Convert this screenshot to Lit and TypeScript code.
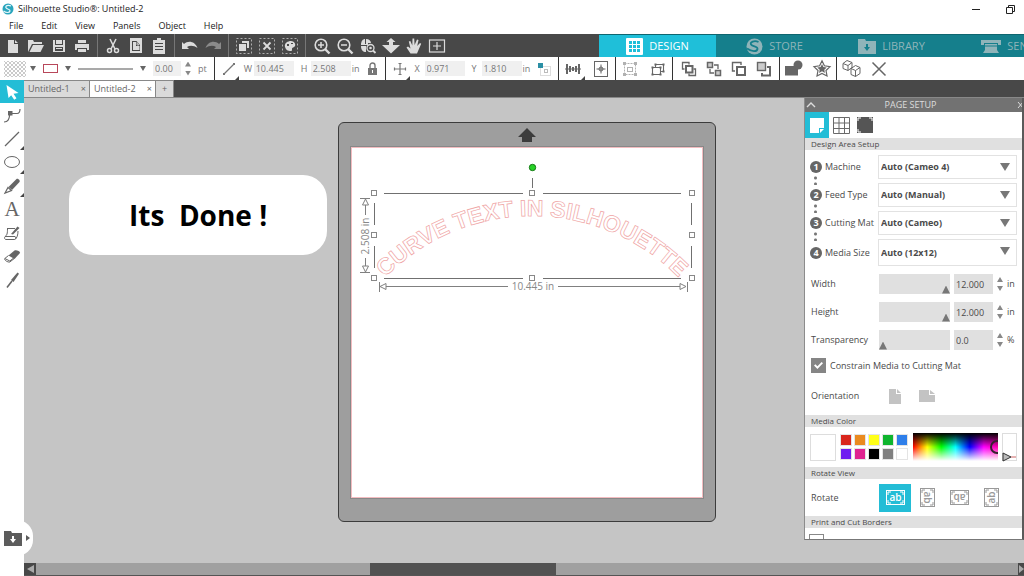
import { LitElement, html, svg, css, nothing } from "lit";
import { customElement, state } from "lit/decorators.js";
import { classMap } from "lit/directives/class-map.js";
import { styleMap } from "lit/directives/style-map.js";

const icon = (body: unknown, w = 16, h = w) =>
  html`<svg class="icon" width=${w} height=${h} viewBox="0 0 ${w} ${h}" aria-hidden="true">${body}</svg>`;

const line = (d: string, width = 1) =>
  svg`<path d=${d} fill="none" stroke="currentColor" stroke-width=${width}></path>`;
const solid = (d: string) => svg`<path d=${d} fill="currentColor" fill-rule="evenodd"></path>`;
const dashed = svg`<rect x="0.5" y="0.5" width="15" height="15" fill="none" stroke="currentColor" stroke-dasharray="2 2" opacity="0.7"></rect>`;

const fileTools: [string, unknown][][] = [
  [
    ["New", solid("M3 2h6v4h4v9H3zM10 2l3 3h-3z")],
    ["Open", svg`${solid("M0 14V2h5l1 2h8v2H4z")}${solid("M1.500 14L5 7h11l-3.500 7z")}`],
    ["Save", solid("M2 2h2v5h8V2h2v12H2zM5 2h6v4H5zM4 9v4h8V9zM5 10h6v1H5z")],
    ["Print", svg`${solid("M4 2h8v3H4zM1 6h14v6h-2v-2H3v2H1z")}${solid("M4 11h8v3H4z")}`],
  ],
  [
    ["Cut", svg`${line("M5 1l5 10M11 1L6 11", 1.6)}<circle cx="4.500" cy="12.500" r="2" fill="none" stroke="currentColor" stroke-width="1.500"></circle><circle cx="11.500" cy="12.500" r="2" fill="none" stroke="currentColor" stroke-width="1.500"></circle>`],
    ["Copy", svg`${solid("M2 0h12v15H2zM4 3v10h8V7L8.500 3z")}${solid("M5 4h3v4h3.500v4H5z")}${line("M9 4.500l2 2.500H9z", 0.8)}`],
    ["Paste", solid("M2 2h4V0h4v2h4v14H2zM4 5v1h8V5zM4 8v1h8V8zM4 11v1h8v-1z")],
  ],
  [
    ["Undo", solid("M0 11V4l2 2c4-4 11-3 13.500 4C12 7.500 8 7 5 9l2 2z")],
    ["Redo", svg`<g opacity="0.45">${solid("M16 11V4l-2 2C10 2 3 3 .5 10 4 7.500 8 7 11 9l-2 2z")}</g>`],
  ],
  [
    ["Select all", svg`${dashed}${solid("M6 3h7v7h-2V5H6zM3 6h7v7H3z")}`],
    ["Deselect", svg`${dashed}${line("M4.500 4.500l7 7M11.500 4.500l-7 7", 1.8)}`],
    ["Select by color", svg`${dashed}${solid("M3 9c-1-4 3-6 6-6s5 3 4 5-3 1-3 3 0 2-2 2-4-1-5-4zM5 6v2h2V6zM9 5v1h2V5z")}`],
  ],
  [
    ["Zoom in", svg`<circle cx="7" cy="7" r="5.800" fill="none" stroke="currentColor" stroke-width="1.600"></circle>${line("M11 11l4.500 4.500", 2.400)}${line("M7 4v6M4 7h6", 1.500)}`],
    ["Zoom out", svg`<circle cx="7" cy="7" r="5.800" fill="none" stroke="currentColor" stroke-width="1.600"></circle>${line("M11 11l4.500 4.500", 2.400)}${line("M4 7h6", 1.500)}`],
    ["Zoom selection", svg`${solid("M1 7c0-4 2-6 4-6v5h1V1c3 0 5 2 5 4H8v2zM1 8h5v6c-3 0-5-2-5-6z")}<circle cx="10.500" cy="10" r="3.500" fill="none" stroke="currentColor" stroke-width="1.300"></circle><circle cx="10.500" cy="10" r="1.300" fill="currentColor"></circle>${line("M13 12.500l2.500 2.500", 1.8)}`],
    ["Drag zoom", solid("M8 0l4.500 4H10v3h7l-9 8.500L-1 7h7V4H3.500z")],
    ["Pan", solid("M4.500 15.500L.5 9.500 2 8.500l2.500 2L2.800 3.500 4.300 3 6.300 7.500 6.500.5H8.200l.4 6.500L11 1.500l1.500.6-1.300 5.900L14 5l1.200.8L12.500 12 11 15.500z")],
    ["Fit to page", svg`<rect x="0.500" y="2" width="15" height="12" fill="none" stroke="currentColor" stroke-width="1.200"></rect>${line("M8 4v8M4 8h8", 1.200)}`],
  ],
];

const editTools: [string, unknown, boolean?][][] = [
  [
    ["Align", svg`${solid("M1 3h2v10H1zM4 5h2v6H4zM7 6h2v4H7zM10 5h2v6h-2zM13 3h2v10h-2z")}${line("M0 8h16")}`, true],
    ["Center to page", svg`<rect x="1.500" y="0.500" width="13" height="15" fill="none" stroke="currentColor"></rect>${line("M8 3.500v9M3.500 8h9")}<circle cx="8" cy="8" r="2" fill="none" stroke="currentColor"></circle>`],
  ],
  [
    ["Group", svg`<g opacity="0.5"><rect x="2.500" y="2.500" width="11" height="11" fill="none" stroke="currentColor" stroke-dasharray="2 1"></rect>${solid("M1 1h3v3H1zM12 1h3v3h-3zM1 12h3v3H1zM12 12h3v3h-3z")}<rect x="5.500" y="6.500" width="5" height="4" fill="none" stroke="currentColor"></rect></g>`],
    ["Ungroup", svg`${line("M2.500 6.500h8v7h-8zM5.500 6V3.500h8v7H11", 1.1)}${solid("M1.500 5.500h2v2h-2zM9.500 5.500h2v2h-2zM1.500 12.500h2v2h-2zM9.500 12.500h2v2h-2zM12.500 2.500h2v2h-2zM12.500 9.500h2v2h-2zM4.500 2.500h2v2h-2z")}`],
  ],
  [
    ["Bring to front", svg`${line("M5 5h6.500v6.500H5z", 2)}${line("M3.500 8H1.500V1.500H8v2M12.500 8h2v6.500H8v-2", 1.3)}`],
    ["Send to back", svg`<path d="M1.500 1.500h5v5h-5zM9.500 9.500h5v5h-5z" fill="#ccc" stroke="currentColor" stroke-width="1.500"></path>${line("M8 4h4v4M4 8v4h4", 1.3)}`],
    ["Bring forward", svg`${line("M6 6h8v8H6z", 2)}${line("M4 10H1.500V1.500H10V4", 1.4)}`],
    ["Send backward", svg`<rect x="1.500" y="1.500" width="8" height="8" fill="#ccc" stroke="currentColor" stroke-width="1.400"></rect>${line("M11 6h3v8.500H6V12", 2)}`],
  ],
  [
    ["Modify", svg`<rect x="0" y="6" width="13" height="9.500" fill="currentColor"></rect><circle cx="13" cy="5" r="4.500" fill="currentColor"></circle>`],
    ["Offset", svg`${line("M9 .8l2.400 5 5.600.8-4 3.900 1 5.500-5-2.600-5 2.600 1-5.500-4-3.900 5.600-.8z", 1.2)}${solid("M9 4l1.400 3 3.300.4-2.400 2.300.6 3.200L9 11.300l-2.900 1.600.6-3.200-2.400-2.300 3.300-.4z")}`],
  ],
  [
    ["Warehouse", svg`${line("M1 3.500l4-3 5 2v5l-4 3-5-2zM1 3.500l5 2v5M6 5.500l4-3M9 8.500l4.500-3 4.500 2v6l-4.500 3-4.500-2zM9 8.500l4.500 2v6M13.500 10.500l4.500-3")}`],
    ["Close", line("M1.500 1.500l13 13M14.500 1.500l-13 13", 1.5)],
  ],
];
const wide = new Set(["Modify", "Offset", "Warehouse"]);

const drawTools: [string, unknown, boolean?][] = [
  ["Select", svg`<path d="M2.500 1l12 8-5 .8 3 4.500-2.300 1.500-3-4.600L4.500 14z" fill="#fff"></path>`],
  ["Edit points", svg`${line("M0 15c4 0 5-2 6-8.500h7c2 0 3-1 3-4.500", 1.2)}${solid("M4 4h4.500v4.500H4z")}`],
  ["Line", line("M1 15L15 1", 1.2), true],
  ["Ellipse", svg`<ellipse cx="8" cy="8" rx="7.500" ry="5.500" fill="none" stroke="currentColor"></ellipse>`, true],
  ["Draw", svg`${solid("M4.500 9L12.500 1c1.500-.8 4 1.500 3 3L8 12z")}${line("M4 9.500L7.500 12.500 1 15z", 1.2)}`, true],
  ["Text", nothing],
  ["Sketch", svg`${line("M3 3.500h8M3.500 3.500c0 5-.5 7-2.500 8h10c1 0 1 3-.5 3H1.500c-1.500-1-1-3 0-3M14 6c0 4-1 7-3 8.500")}${solid("M7 9l6.500-7.500 2 1.500L9 9.500z")}`],
  ["Eraser", svg`${solid("M4.500 7.500l6-5c1.500-.8 6 .5 5.500 2.500L10.500 11z")}${line("M4.500 7.500L.8 10.500c-1 1.500 3 4 5 3.500l4.500-3.500M.8 10.500l5 2.500 4.500-3.500", 1)}`],
  ["Knife", svg`${solid("M7 8l6.500-7.500 1.500 1.200L9.500 10z")}${line("M8 9l-5 6.500", 1.6)}`],
];

const folder = svg`<path d="M0 1h7l1 2h10v13H0z" fill="currentColor"></path>`;

const workspaces: [string, unknown][] = [
  ["DESIGN", svg`<rect width="17" height="17" rx="1" fill="#fff"></rect><path d="M3 3h3v3H3zM7 3h3v3H7zM11 3h3v3h-3zM3 7h3v3H3zM7 7h3v3H7zM11 7h3v3h-3zM3 11h3v3H3zM7 11h3v3H7zM11 11h3v3h-3z" fill="#1fbfd9"></path>`],
  ["STORE", svg`<circle cx="8.500" cy="8.500" r="8" fill="currentColor"></circle><path d="M12.500 4c-4-2-9 0-7.500 2.500S12 8 11.500 11 6 14 1 10.500" fill="none" stroke="#157f8c" stroke-width="1.800"></path>`],
  ["LIBRARY", svg`${folder}<path d="M8 6h2v3h2l-3 4-3-4h2z" fill="#157f8c"></path>`],
  ["SEND", svg`<path d="M0 2h20v5h-3V5H3v2H0zM4 6h12v6l2 3H2l2-3z" fill="currentColor"></path><path d="M4 8h12" stroke="#157f8c"></path>`],
];

const machineRows: [string, string][] = [
  ["Machine", "Auto (Cameo 4)"],
  ["Feed Type", "Auto (Manual)"],
  ["Cutting Mat", "Auto (Cameo)"],
  ["Media Size", "Auto (12x12)"],
];
const sizeRows: [string, number, string, string][] = [
  ["Width", 100, "12.000", "in"],
  ["Height", 100, "12.000", "in"],
  ["Transparency", 0, "0.0", "%"],
];
const palette = ["#d9261c", "#ea8a1f", "#ffff1a", "#0fb52e", "#2f7fea", "#6f1df0", "#df2390", "#000000", "#808080", "#ffffff"];

const down = html`<svg class="icon" width="6" height="6" viewBox="0 0 6 6" aria-hidden="true"><path d="M0 0h6L3 5z" fill="#666"></path></svg>`;

const shared = css`
  * { box-sizing: border-box; }
  :host { font-family: "Open Sans", "Noto Sans", sans-serif; font-size: 9px; line-height: 12px; color: #4a4a4a; }
  button { font: inherit; color: inherit; background: none; border: 0; padding: 0; margin: 0; display: flex; align-items: center; justify-content: center; position: relative; }
  input, select { font: inherit; color: inherit; border: 0; margin: 0; border-radius: 0; min-width: 0; }
  .icon { display: block; flex: none; overflow: visible; }
  .spin { display: flex; flex-direction: column; gap: 4px; flex: none; }
  .spin button { width: 6px; height: 5px; background: #888; clip-path: polygon(50% 0, 100% 100%, 0 100%); }
  .spin button + button { clip-path: polygon(0 0, 100% 0, 50% 100%); }
`;

const spinner = (name: string) => html`<span class="spin">
  <button aria-label="Increase ${name}"></button><button aria-label="Decrease ${name}"></button>
</span>`;

@customElement("design-mat")
class DesignMat extends LitElement {
  static styles = [shared, css`
    :host { display: block; }
    .mat { background: #9e9e9e; border: 1px solid #3c3c3c; border-radius: 6px; padding: 0 11px 22px; }
    .feed { height: 23px; display: flex; align-items: center; justify-content: center; }
    .sheet { background: #fff; display: block; }
    .dim { font-size: 10px; fill: #888; }
    .curve { font: 700 23px "Liberation Sans", sans-serif; fill: none; stroke: #efa5a5; stroke-width: 0.7px; }
  `];
  render() {
    const handles = [[24, 47], [182, 47], [342, 47], [24, 89], [342, 89], [24, 132], [182, 132], [342, 132]];
    return html`<div class="mat">
      <div class="feed">${icon(svg`<path d="M9 0l9 9h-4v5H4V9H0z" fill="#3c3c3c"></path>`, 18, 14)}</div>
      <svg class="sheet" width="354" height="353" viewBox="0 0 354 353" role="img" aria-label="Curve text in Silhouette">
        <rect x="0.500" y="0.500" width="353" height="352" fill="none" stroke="#888"></rect>
        <rect x="1.500" y="1.500" width="351" height="350" fill="none" stroke="#f3bcc0"></rect>
        <path id="arc" d="M-24 276A206 206 0 0 1 388 276" fill="none"></path>
        <text class="curve" text-anchor="middle"><textPath href="#arc" startOffset="50%">CURVE TEXT IN SILHOUETTE</textPath></text>
        <path d="M34 47.500H173M193 47.500H331M34 132.500H173M193 132.500H331M24.500 57V79M24.500 100V122M341.500 57V79M341.500 100V122M182.500 32V42" stroke="#707070" fill="none"></path>
        ${handles.map(([x, y]) => svg`<rect x=${x - 2.5} y=${y - 2.5} width="5" height="5" fill="#fff" stroke="#888"></rect>`)}
        <circle cx="182.500" cy="21.500" r="3.200" fill="#27d227" stroke="#147a14"></circle>
        <path d="M10 52.500H20M15.500 53l-3 6h6zM15.500 59V69M15.500 112V120M12.500 120h6l-3 6zM10 126.500H20M29.500 136V146M30 140.500l6-3v6zM36 140.500H158M208 140.500H330M330 137.500l6 3-6 3zM337.500 136V146" fill="none" stroke="#808080"></path>
        <text class="dim" x="183" y="144" text-anchor="middle">10.445 in</text>
        <text class="dim" transform="translate(19 90) rotate(-90)" text-anchor="middle">2.508 in</text>
      </svg>
    </div>`;
  }
}

@customElement("page-setup")
class PageSetup extends LitElement {
  @state() private rotation = 0;
  static styles = [shared, css`
    :host { display: block; background: #fff; border-left: 1px solid #8c8c8c; border-right: 2px solid #5a5a5a; border-bottom: 1px solid #777; overflow: hidden; }
    .head { height: 14px; background: #727272; color: #ddd; display: flex; align-items: center; padding-left: 1px; }
    .head span { flex: 1; text-align: center; padding-right: 13px; }
    .tabs { display: flex; height: 26px; }
    .tabs button { width: 24px; color: #6a6a6a; }
    .tabs .on, .turn .on { background: #23bdd6; color: #fff; }
    h2 { font-size: 8px; line-height: 12px; font-weight: 400; margin: 0; padding-left: 6px; background: #e0e0e0; }
    .rows { padding: 5px 5px 2px; display: flex; flex-direction: column; gap: 4px; }
    .row { display: grid; grid-template-columns: 68px 1fr; align-items: center; min-height: 24px; position: relative; }
    .row label { display: flex; align-items: center; white-space: nowrap; gap: 3px; }
    .num { width: 12px; height: 12px; border-radius: 6px; background: #666; color: #fff; font-weight: 700; text-align: center; }
    .link { position: absolute; left: 4px; top: 20px; width: 3px; height: 10px; background: radial-gradient(circle, #777 1px, transparent 2px) 0 0 / 3px 6px; }
    .pick { position: relative; display: flex; height: 24px; }
    .row:nth-child(4) .pick { height: 27px; }
    select { appearance: none; background: #fff; border: 1px solid #e2e2e2; flex: 1; font-weight: 700; padding: 0 2px; color: #4a4a4a; }
    .pick .icon { position: absolute; right: 7px; top: 8px; pointer-events: none; }
    .sizes { padding: 6px 9px 0 6px; display: flex; flex-direction: column; gap: 8px; }
    .size { display: grid; grid-template-columns: 64px 71px 39px 6px 10px; column-gap: 4px; align-items: center; height: 20px; }
    .size input { width: 100%; height: 20px; background: #e0e0e0; padding: 0 2px; }
    .size input[type="range"] { appearance: none; padding: 0; }
    input[type="range"]::-webkit-slider-thumb { appearance: none; width: 8px; height: 8px; margin-top: 11px; background: #777; clip-path: polygon(50% 0, 100% 100%, 0 100%); }
    .check { display: flex; align-items: center; gap: 4px; padding: 8px 0 0 6px; }
    .check input { appearance: none; width: 15px; height: 15px; background: #858585; display: grid; place-items: center; }
    .check input:checked::after { content: ""; width: 9px; height: 7px; background: #fff; clip-path: polygon(0 50%, 15% 32%, 38% 60%, 85% 0, 100% 18%, 38% 100%); }
    .orient { display: flex; align-items: center; padding: 4px 6px 0; height: 42px; }
    .orient span, .turn span { width: 68px; color: #4a4a4a; }
    .orient button, .turn button { width: 32px; height: 28px; color: #999; }
    .orient button { color: #c3c3c3; }
    .media { display: flex; align-items: center; height: 40px; padding: 0 5px; gap: 4px; }
    .current { width: 26px; height: 27px; border: 1px solid #ddd; background: #fff; }
    .colors { display: grid; grid-template-columns: repeat(5, 12px); gap: 2px; }
    .colors button { height: 12px; border: 1px solid #e4e4e4; }
    .spectrum { position: relative; flex: 1; margin-left: 1px; height: 28px; overflow: hidden; background: linear-gradient(#000, transparent 50%, #fff), linear-gradient(90deg, #f00, #ff0, #0f0, #0ff, #00f, #f0f, #f0a); }
    .ring { position: absolute; right: -6px; top: 7px; width: 14px; height: 14px; border: 2px solid #3a2030; border-radius: 7px; }
    .shade { position: relative; width: 15px; height: 28px; border: 1px solid #ddd; }
    .shade .icon { position: absolute; left: -1px; bottom: -2px; }
    .turn { display: flex; align-items: center; height: 37px; padding: 0 6px; }
    .turn button:nth-of-type(2) svg { transform: rotate(90deg); }
    .turn button:nth-of-type(3) svg { transform: rotate(180deg); }
    .turn button:nth-of-type(4) svg { transform: rotate(270deg); }
    .turn .on.on { color: #fff; }
    .turn text { font-size: 10px; font-weight: 600; fill: currentColor; }
    .border { padding: 6px 0 0 4px; height: 11px; overflow: hidden; }
    .border input { appearance: none; display: block; width: 15px; height: 15px; border: 1px solid #888; }
  `];
  render() {
    return html`
      <div class="head">
        <button aria-label="Collapse">${icon(line("M1 6l4-4 4 4", 1.4), 10, 8)}</button>
        <span>PAGE SETUP</span>
        <button aria-label="Close panel">${icon(line("M0 1l5 6M5 1L0 7"), 4, 8)}</button>
      </div>
      <div class="tabs">
        <button class="on" aria-label="Page">${icon(svg`<path d="M0 0h14v10h-5v5H0z" fill="#fff"></path><path d="M10 15v-4h4z" fill="#fff"></path>`, 14, 15)}</button>
        <button aria-label="Grid">${icon(line("M.5.500h16v16H.5zM6 0v17M11.500 0v17M0 6h17M0 11.500h17"), 17)}</button>
        <button aria-label="Registration marks">${icon(svg`<rect width="16" height="16" fill="#555"></rect><path d="M1 4V1h3M12 1h3v3M1 12v3h3" fill="none" stroke="#fff"></path>`, 16)}</button>
      </div>
      <h2>Design Area Setup</h2>
      <div class="rows">
        ${machineRows.map(([name, value], i) => html`<div class="row">
          <label for="m${i}"><span class="num">${i + 1}</span>${name}</label>
          ${i < 3 ? html`<i class="link"></i>` : nothing}
          <span class="pick"><select id="m${i}"><option>${value}</option></select>
            ${icon(svg`<path d="M0 0h10L5 8z" fill="#777"></path>`, 10, 8)}</span>
        </div>`)}
      </div>
      <div class="sizes">
        ${sizeRows.map(([name, pos, value, unit], i) => html`<div class="size">
          <label for="s${i}">${name}</label>
          <input type="range" aria-label="${name} slider" .value=${String(pos)}>
          <input id="s${i}" type="text" .value=${value}>
          ${spinner(name)}<span>${unit}</span>
        </div>`)}
      </div>
      <label class="check"><input type="checkbox" checked>Constrain Media to Cutting Mat</label>
      <div class="orient"><span>Orientation</span>
        <button aria-label="Portrait">${icon(solid("M0 0h7v5h5v10H0zM8 0l4 4H8z"), 12, 15)}</button>
        <button aria-label="Landscape">${icon(solid("M0 0h10v5h6v7H0zM11 0l5 4h-5z"), 16, 12)}</button>
      </div>
      <h2>Media Color</h2>
      <div class="media">
        <span class="current"></span>
        <div class="colors">${palette.map((c) => html`<button aria-label=${c} style=${styleMap({ background: c })}></button>`)}</div>
        <div class="spectrum"><i class="ring"></i></div>
        <div class="shade">${icon(svg`<path d="M1 1l8 4-8 4z" fill="#bbb" stroke="#333"></path><path d="M9 5h5" stroke="#c66"></path>`, 14, 10)}</div>
      </div>
      <h2>Rotate View</h2>
      <div class="turn"><span>Rotate</span>
        ${[0, 90, 180, 270].map((deg) => html`<button class=${classMap({ on: deg === this.rotation })} aria-label="Rotate ${deg}" @click=${() => (this.rotation = deg)}>
          ${icon(svg`<rect x="0.500" y="0.500" width="18" height="14" fill="none" stroke="currentColor"></rect><path d="M2 5V2h3M14 2h3v3M2 10v3h3M14 13h3v-3" fill="none" stroke="currentColor"></path><text x="9.500" y="11" text-anchor="middle">ab</text>`, 19, 15)}
        </button>`)}
      </div>
      <h2>Print and Cut Borders</h2>
      <div class="border"><input type="checkbox" aria-label="Show print border"></div>`;
  }
}

@customElement("app-root")
class AppRoot extends LitElement {
  @state() private tool = "Select";
  static styles = [shared, css`
    :host { display: flex; flex-direction: column; height: 100vh; overflow: hidden; background: #fff; }
    .title { display: flex; align-items: center; height: 18px; padding: 0 9px 0 2px; color: #222; gap: 4px; }
    .title span { flex: 1; }
    .title button + button { margin-left: 22px; }
    .menu { display: flex; align-items: center; height: 16px; padding-left: 9px; gap: 18px; color: #222; }
    .bar { display: flex; height: 23px; background: #484848; color: #dcdcdc; }
    .tools { display: flex; flex: 1; }
    .set { display: flex; padding: 0 4px 0 3px; border-right: 1px solid #777; }
    .set:first-child { padding-left: 1px; }
    .set:last-child { border: 0; padding-left: 4px; }
    .set button { width: 23px; }
    .spaces { display: flex; flex: 0 0 425px; overflow: hidden; background: #157f8c; border-top: 1px solid #0f6670; }
    .spaces a { flex: 0 0 117px; display: flex; align-items: center; justify-content: center; gap: 6px; font-size: 11px; color: #8fb4b9; text-decoration: none; }
    .spaces .on { background: #1fbfd9; color: #fff; }
    .options { display: flex; height: 23px; background: #fff; color: #777; overflow: hidden; }
    .opt { display: flex; align-items: center; gap: 7px; padding: 0 7px 0 6px; border-right: 1px solid #333; }
    .opt:first-child { padding-left: 4px; }
    .opt label { display: flex; align-items: center; gap: 3px; }
    .opt label span { width: 7px; }
    .opt input { width: 40px; height: 15px; background: #f0f0f0; padding: 0 2px; }
    .opt .stroke { width: 28px; }
    .near { display: flex; align-items: center; gap: 4px; }
    .drop { gap: 7px; }
    .drop.fill { gap: 4px; }
    .duo { display: flex; align-items: center; gap: 1px; }
    .pair { display: flex; border-right: 1px solid #333; color: #666; }
    .pair:last-child { border: 0; }
    .pair button { width: 28px; }
    .pair.four { padding: 0 3px; }
    .pair.four button { width: 25px; }
    .more::after { content: ""; position: absolute; right: 2px; bottom: 0; border: 2px solid; border-color: transparent #444 #444 transparent; }
    .opt .more { height: 23px; }
    .opt .more::after { right: -2px; }
    .main { display: flex; flex: 1; min-height: 0; }
    .side { flex: 0 0 24px; position: relative; z-index: 1; background: #fff; color: #666; }
    .draw { display: flex; flex-direction: column; justify-content: space-between; height: 211px; }
    .draw button { width: 24px; height: 23px; }
    .draw .on { background: #23bdd6; }
    .draw .more::after { right: 0; }
    .serif { font: 21px "Liberation Serif", serif; }
    .lib { position: absolute; left: 0; bottom: 20px; width: 33px; height: 36px; background: #fff; border-radius: 0 16px 16px 0; gap: 4px; color: #5c5c5c; }
    .work { flex: 1; display: flex; flex-direction: column; min-width: 0; }
    .docs { display: flex; height: 18px; background: #484848; border-bottom: 1px solid #888; color: #666; }
    .doc { display: flex; align-items: center; justify-content: space-between; width: 66px; padding: 0 3px 0 4px; background: #dadada; border: 1px solid #888; border-width: 1px 1px 0 0; }
    .doc.on { background: #fff; }
    .doc.add { width: 18px; padding: 0; justify-content: center; }
    .canvas { position: relative; flex: 1; display: flex; justify-content: center; align-items: flex-start; padding: 24px 0 0 6px; background: #c5c5c5; min-height: 0; overflow: hidden; }
    .note { position: absolute; left: 45px; top: 77px; padding: 20px 60px; border-radius: 24px; background: #fff; color: #000; font-size: 28px; line-height: 40px; font-weight: 700; white-space: pre; }
    page-setup { position: absolute; right: 0; top: 0; width: 220px; }
    .scroll { display: flex; align-items: stretch; height: 13px; background: #a0a0a0; border-bottom: 1px solid #555; color: #aaa; }
    .scroll button { width: 12px; background: #484848; }
    .scroll button:last-child { width: 6px; }
    .track { flex: 1; display: flex; }
    .thumb { width: 19%; margin-left: 34%; background: #525252; }
  `];

  private field(name: string, value: string) {
    return html`<label><span>${name}</span><input type="text" .value=${value}></label>`;
  }

  render() {
    return html`
      <header class="title">
        ${icon(svg`<circle cx="6" cy="6" r="5.500" fill="#2aa5bd"></circle><path d="M9 3C6 1.500 3 3 4 4.800S8.500 6 8 8 4 10 1.500 8" fill="none" stroke="#e8f8fb" stroke-width="1.200"></path>`, 12)}
        <span>Silhouette Studio®: Untitled-2</span>
        <button aria-label="Minimize">${icon(line("M0 4.500h8"), 8)}</button>
        <button aria-label="Restore">${icon(svg`<path d="M.5 2.500h6v6h-6zM2.500 2V.500h6v6H7" fill="none" stroke="#222"></path>`, 9)}</button>
      </header>
      <nav class="menu">${["File", "Edit", "View", "Panels", "Object", "Help"].map((m) => html`<button>${m}</button>`)}</nav>
      <div class="bar">
        <div class="tools">${fileTools.map((set) => html`<div class="set">${set.map(([n, i]) => html`<button aria-label=${n}>${icon(i)}</button>`)}</div>`)}</div>
        <nav class="spaces">${workspaces.map(([n, i], k) => html`<a href="#${n}" class=${classMap({ on: k === 0 })}>${icon(i, k > 2 ? 20 : k > 1 ? 18 : 17, 17)}${n}</a>`)}</nav>
      </div>
      <div class="options">
        <div class="opt">
          <button class="drop fill" aria-label="Fill color">${icon(svg`<defs><pattern id="hatch" width="4" height="4" patternUnits="userSpaceOnUse"><path d="M0 0l4 4M4 0L0 4" stroke="#bdbdbd" stroke-width="0.800"></path></pattern></defs><rect width="22" height="16" fill="url(#hatch)"></rect>`, 22, 16)}${down}</button>
          <button class="drop" aria-label="Line color">${icon(svg`<rect x="0.500" y="0.500" width="14" height="8" fill="#fff" stroke="#b8475a"></rect>`, 15, 9)}${down}</button>
          <button class="drop" aria-label="Line style">${icon(svg`<path d="M0 1h55" stroke="#555" stroke-width="1.200"></path>`, 55, 2)}${down}</button>
          <div class="near"><input class="stroke" type="text" aria-label="Line thickness" .value=${"0.00"}>${spinner("thickness")}</div>
          <span>pt</span>
        </div>
        <div class="opt">
          <button class="more" aria-label="Size tool">${icon(svg`${line("M3 13L13 3", 1.2)}${solid("M2 12h2v2H2zM12 2h2v2h-2z")}`)}</button>
          ${this.field("W", "10.445")}
          <div class="duo">${this.field("H", "2.508")}<span>in</span></div>
          <button aria-label="Lock ratio">${icon(svg`${solid("M1 6h9v7H1zM5 8v3h1V8z")}${line("M3 6V3.500a2.500 2.500 0 0 1 5 0V6", 1.4)}`, 11, 14)}</button>
        </div>
        <div class="opt">
          <button class="more" aria-label="Move">${icon(line("M8 2v12M2 8h12M6.500 2.500h3M6.500 13.500h3M2.500 6.500v3M13.500 6.500v3", 1.2))}</button>
          ${this.field("X", "0.971")}
          <div class="duo">${this.field("Y", "1.810")}<span>in</span></div>
          <button aria-label="Anchor">${icon(svg`<rect x="3.500" y="4.500" width="10" height="9" fill="none" stroke="#ddd"></rect><rect x="7.500" y="7.500" width="3" height="3" fill="none" stroke="#bbb"></rect><rect x="1" y="1" width="5" height="5" fill="#2b8fa5"></rect>`, 14)}</button>
        </div>
        ${editTools.map((set) => html`<div class=${classMap({ pair: true, four: set.length === 4 })}>${set.map(([n, i, more]) => html`<button class=${classMap({ more: !!more })} aria-label=${n}>${icon(i, wide.has(n) ? 18 : 16, wide.has(n) ? 17 : 16)}</button>`)}</div>`)}
      </div>
      <div class="main">
        <aside class="side">
          <div class="draw">${drawTools.map(([n, i, more]) => html`<button class=${classMap({ on: this.tool === n, more: !!more })} aria-label=${n} @click=${() => (this.tool = n)}>${n === "Text" ? html`<span class="serif">A</span>` : icon(i)}</button>`)}</div>
          <button class="lib" aria-label="Library">${icon(svg`${folder}<path d="M8 6h2v3h2l-3 4-3-4h2z" fill="#fff"></path>`, 18, 17)}${icon(solid("M0 0l4 3-4 3z"), 4, 6)}</button>
        </aside>
        <section class="work">
          <div class="docs">
            <button class="doc">Untitled-1<span>×</span></button>
            <button class="doc on">Untitled-2<span>×</span></button>
            <button class="doc add">+</button>
          </div>
          <div class="canvas">
            <design-mat></design-mat>
            <div class="note">Its  Done !</div>
            <page-setup></page-setup>
          </div>
          <div class="scroll">
            <button aria-label="Scroll left">${icon(solid("M8 0v8L1 4z"), 8)}</button>
            <div class="track"><div class="thumb"></div></div>
            <button aria-label="Scroll right">${icon(solid("M0 0v8l5-4z"), 5, 8)}</button>
          </div>
        </section>
      </div>`;
  }
}
